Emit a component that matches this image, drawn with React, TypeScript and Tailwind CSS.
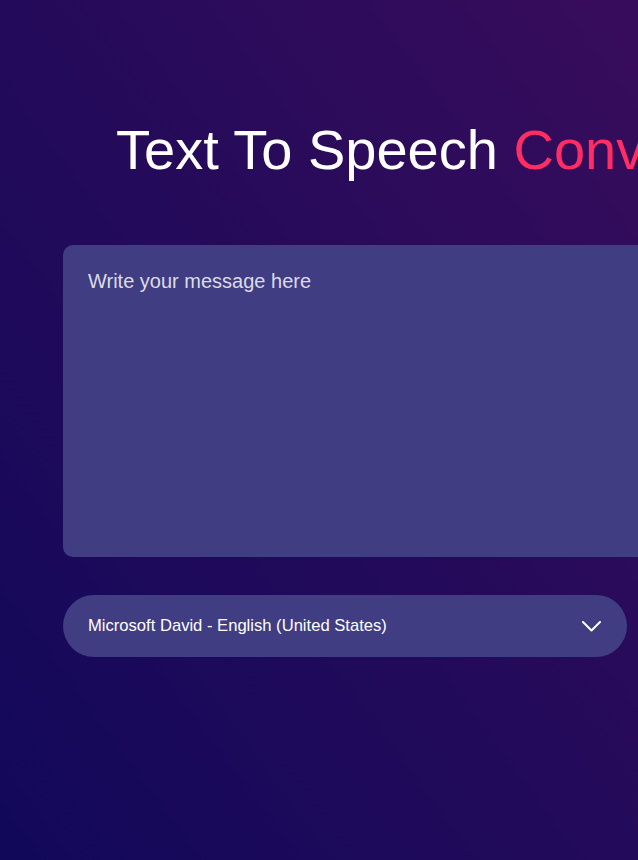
export default function App() {
  return (
    <div
      className="min-h-screen w-full overflow-hidden bg-gradient-to-tr from-[#11085a] via-[#240a5a] to-[#380c5c]"
      style={{ fontFamily: '"Liberation Sans", Arial, sans-serif' }}
    >
      <div className="w-[780px] ml-[63px] pt-[118px]">
        <h1 className="pl-[53px] whitespace-nowrap text-[56px] leading-[64px] font-normal text-white">
          Text To Speech <span className="text-[#ff2d64]">Converter</span>
        </h1>

        <textarea
          placeholder="Write your message here"
          className="mt-[63px] block w-full h-[312px] resize-none rounded-[10px] bg-[#403d82] px-[25px] pt-[21px] pb-[24px] text-[20px] text-white placeholder:text-[#dcdbe6] outline-none"
        />

        <div className="mt-[38px] flex items-center gap-5">
          <div className="flex h-[62px] w-[564px] items-center justify-between rounded-full bg-[#403d82] pl-[25px] pr-[26px]">
            <span className="text-[16.6px] text-white">Microsoft David - English (United States)</span>
            <svg width="19" height="11" viewBox="0 0 19 11" fill="none" className="text-white">
              <polyline points="1,1 9.5,9.5 18,1" stroke="currentColor" strokeWidth="2" strokeLinecap="round" strokeLinejoin="round" />
            </svg>
          </div>
        </div>
      </div>
    </div>
  )
}
